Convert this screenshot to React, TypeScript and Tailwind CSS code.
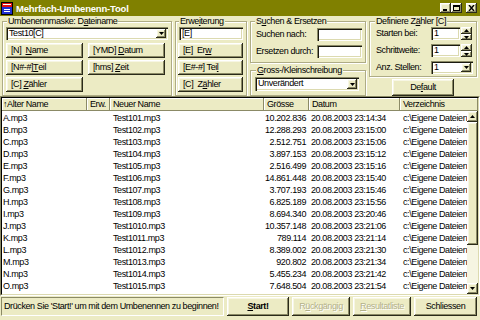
import React from "react";

const raised =
  "bg-[#ecebc4] shadow-[inset_-1px_-1px_0_#2a2a1a,inset_1px_1px_0_#ffffff,inset_-2px_-2px_0_#8b8a66,inset_2px_2px_0_#f7f6e4]";
const sunken =
  "bg-white shadow-[inset_1px_1px_0_#8b8a66,inset_2px_2px_0_#1a1a10,inset_-1px_-1px_0_#ffffff,inset_-2px_-2px_0_#dcdab0]";

function Btn({
  children,
  className = "",
}: {
  children: React.ReactNode;
  className?: string;
}) {
  return (
    <div className={`${raised} flex items-center pl-[5px] whitespace-nowrap ${className}`}>
      {children}
    </div>
  );
}

function CBtn({
  children,
  className = "",
}: {
  children: React.ReactNode;
  className?: string;
}) {
  return (
    <div className={`${raised} flex items-center justify-center whitespace-nowrap ${className}`}>
      {children}
    </div>
  );
}

function Group({
  title,
  className = "",
  legendClass = "",
  children,
}: {
  title: React.ReactNode;
  className?: string;
  legendClass?: string;
  children: React.ReactNode;
}) {
  return (
    <fieldset
      className={`border border-[#aeac85] shadow-[1px_1px_0_#ffffff,inset_1px_1px_0_#ffffff] ${className}`}
    >
      <legend className={`px-[1px] leading-[11px] bg-[#ecebc4] ${legendClass}`}>{title}</legend>
      {children}
    </fieldset>
  );
}

function Down() {
  return (
    <svg width="5" height="3" viewBox="0 0 5 3">
      <polygon points="0,0 5,0 2.5,3" fill="#000" />
    </svg>
  );
}
function Up() {
  return (
    <svg width="5" height="3" viewBox="0 0 5 3">
      <polygon points="0,3 5,3 2.5,0" fill="#000" />
    </svg>
  );
}

function Combo({ value, className = "" }: { value: string; className?: string }) {
  return (
    <div className={`${sunken} flex items-stretch p-[2px] ${className}`}>
      <div className="flex-1 pl-[1px] leading-[9px] whitespace-nowrap overflow-hidden">{value}</div>
      <div className={`${raised} w-[10px] flex items-center justify-center`}>
        <Down />
      </div>
    </div>
  );
}

function Input({ value, className = "" }: { value: string; className?: string }) {
  return (
    <div className={`${sunken} pl-[3px] leading-[13px] whitespace-nowrap ${className}`}>{value}</div>
  );
}

function Spinner() {
  return (
    <div className="flex flex-col w-[11px] h-[13px] ml-[1px]">
      <div className={`${raised} h-[7px] flex items-center justify-center`}>
        <Up />
      </div>
      <div className={`${raised} h-[6px] flex items-center justify-center`}>
        <Down />
      </div>
    </div>
  );
}

function TB({ kind }: { kind: "min" | "max" | "close" }) {
  return (
    <div className={`${raised} w-[11px] h-[10px] flex items-center justify-center`}>
      <svg width="7" height="6" viewBox="0 0 7 6">
        {kind === "min" && <rect x="1" y="4" width="4" height="2" fill="#000" />}
        {kind === "max" && (
          <>
            <rect x="0.5" y="0.5" width="6" height="5" fill="none" stroke="#000" />
            <rect x="0" y="0" width="7" height="2" fill="#000" />
          </>
        )}
        {kind === "close" && (
          <path d="M1 0 L6 6 M6 0 L1 6" stroke="#000" strokeWidth="1.4" />
        )}
      </svg>
    </div>
  );
}

const rows: [string, string, string, string][] = [
  ["A.mp3", "Test101.mp3", "10.202.836", "20.08.2003 23:14:34"],
  ["B.mp3", "Test102.mp3", "12.288.293", "20.08.2003 23:15:00"],
  ["C.mp3", "Test103.mp3", "2.512.751", "20.08.2003 23:15:06"],
  ["D.mp3", "Test104.mp3", "3.897.153", "20.08.2003 23:15:12"],
  ["E.mp3", "Test105.mp3", "2.516.499", "20.08.2003 23:15:16"],
  ["F.mp3", "Test106.mp3", "14.861.448", "20.08.2003 23:15:40"],
  ["G.mp3", "Test107.mp3", "3.707.193", "20.08.2003 23:15:46"],
  ["H.mp3", "Test108.mp3", "6.825.189", "20.08.2003 23:15:56"],
  ["I.mp3", "Test109.mp3", "8.694.340", "20.08.2003 23:20:46"],
  ["J.mp3", "Test1010.mp3", "10.357.148", "20.08.2003 23:21:06"],
  ["K.mp3", "Test1011.mp3", "789.114", "20.08.2003 23:21:14"],
  ["L.mp3", "Test1012.mp3", "8.389.002", "20.08.2003 23:21:30"],
  ["M.mp3", "Test1013.mp3", "920.802", "20.08.2003 23:21:34"],
  ["N.mp3", "Test1014.mp3", "5.455.234", "20.08.2003 23:21:42"],
  ["O.mp3", "Test1015.mp3", "7.648.504", "20.08.2003 23:21:54"],
];

const hdr =
  "bg-[#ecebc4] shadow-[inset_-1px_-1px_0_#8b8a66,inset_1px_1px_0_#ffffff] h-full flex items-center pl-[3px] whitespace-nowrap overflow-hidden";

export default function App() {
  return (
    <div className="w-[480px] h-[320px] overflow-hidden bg-[#ecebc4] text-black text-[9px] tracking-[-0.4px] leading-[11px] font-['Liberation_Sans',Arial,sans-serif] flex flex-col">
      {/* Title bar */}
      <div className="h-[16px] shrink-0 bg-[#808000] flex items-center pl-[1px] pr-[3px]">
        <svg width="12" height="13" viewBox="0 0 12 13">
          <rect x="0" y="0" width="12" height="13" fill="#000" />
          <rect x="1" y="1" width="10" height="11" fill="#2030d0" />
          <rect x="1" y="1" width="10" height="4" fill="#e01010" />
          <rect x="2" y="2" width="8" height="1" fill="#ffffff" />
          <rect x="3" y="7" width="6" height="1" fill="#ffffff" />
          <rect x="3" y="9" width="6" height="1" fill="#ffffff" />
        </svg>
        <span className="ml-[3px] text-white font-bold text-[9.5px] tracking-[-0.2px]">
          Mehrfach-Umbenenn-Tool
        </span>
        <div className="ml-auto flex items-center">
          <TB kind="min" />
          <TB kind="max" />
          <div className="w-[4px]" />
          <TB kind="close" />
        </div>
      </div>

      {/* Top panel */}
      <div className="h-[80px] shrink-0 flex pl-[2px] pr-[3px] gap-[3px]">
        <Group
          title={
            <>
              Umbenennmaske: D<u>a</u>teiname
            </>
          }
          className="w-[170px] h-[80px] pl-[3px] pr-[3px]"
          legendClass="ml-[1px]"
        >
          <Combo value="Test10[C]" className="h-[13px]" />
          <div className="mt-[3px] grid grid-cols-[77px_77px] gap-x-[5px] gap-y-[2px]">
            <Btn className="h-[15px]">
              [N]&nbsp;&nbsp;<u>N</u>ame
            </Btn>
            <Btn className="h-[15px]">
              [YMD]&nbsp;<u>D</u>atum
            </Btn>
            <Btn className="h-[15px]">
              [N#-#] <u>T</u>eil
            </Btn>
            <Btn className="h-[15px]">
              [hms]&nbsp;<u>Z</u>eit
            </Btn>
            <Btn className="h-[15px]">
              [C]&nbsp;<u>Z</u>ähler
            </Btn>
          </div>
        </Group>

        <Group
          title={
            <>
              Erwe<u>i</u>terung
            </>
          }
          className="w-[72px] h-[80px] pl-[2px] pr-[3px]"
          legendClass="ml-[1px]"
        >
          <Input value="[E]" className="h-[13px] ml-[1px]" />
          <div className="mt-[3px] flex flex-col gap-[2px]">
            <Btn className="h-[15px]">
              [E]&nbsp;&nbsp;Er<u>w</u>
            </Btn>
            <Btn className="h-[15px]">
              [E#-#] Tei<u>l</u>
            </Btn>
            <Btn className="h-[15px]">
              [C]&nbsp;&nbsp;Z<u>ä</u>hler
            </Btn>
          </div>
        </Group>

        <div className="w-[116px] flex flex-col">
          <Group
            title={
              <>
                S<u>u</u>chen &amp; Ersetzen
              </>
            }
            className="h-[47px] pl-[5px] pr-[3px] pt-[1px]"
            legendClass="-ml-[1px]"
          >
            <div className="flex items-center h-[13px]">
              <span className="flex-1 whitespace-nowrap">Suchen nach:</span>
              <Input value="" className="w-[45px] h-[13px]" />
            </div>
            <div className="flex items-center h-[13px] mt-[4px]">
              <span className="flex-1 whitespace-nowrap">Ersetzen durch:</span>
              <Input value="" className="w-[45px] h-[13px]" />
            </div>
          </Group>
          <Group
            title={
              <>
                <u>G</u>ross-/Kleinschreibung
              </>
            }
            className="mt-[2px] h-[31px] pl-[4px] pr-[6px]"
            legendClass="ml-[1px]"
          >
            <Combo value="Unverändert" className="mt-[1px] h-[14px]" />
          </Group>
        </div>

        <div className="flex-1 flex flex-col">
          <Group
            title={
              <>
                Definiere Z<u>ä</u>hler [C]
              </>
            }
            className="h-[61px] pl-[6px] pr-[3px]"
            legendClass="-ml-[1px]"
          >
            <div className="flex items-center h-[13px]">
              <span className="w-[55px] whitespace-nowrap">Starten bei:</span>
              <Input value="1" className="w-[29px] h-[13px]" />
              <Spinner />
            </div>
            <div className="flex items-center h-[13px] mt-[4px]">
              <span className="w-[55px] whitespace-nowrap">Schrittweite:</span>
              <Input value="1" className="w-[29px] h-[13px]" />
              <Spinner />
            </div>
            <div className="flex items-center h-[13px] mt-[4px]">
              <span className="w-[55px] whitespace-nowrap">Anz. Stellen:</span>
              <Combo value="1" className="w-[42px] h-[13px]" />
            </div>
          </Group>
          <CBtn className="mt-[2px] h-[17px] w-[62px] mx-auto">
            De<u>f</u>ault
          </CBtn>
        </div>
      </div>

      {/* List */}
      <div className="h-[200px] shrink-0 border border-t-[#8b8a66] border-l-[#8b8a66] border-r-white border-b-white">
        <div className="h-full border border-t-black border-l-black border-r-[#dcdab0] border-b-[#dcdab0] bg-white flex flex-col overflow-hidden">
          <div className="h-[13px] shrink-0 flex">
            <div className={`${hdr} w-[85px] !pl-[1px]`}>↑Alter Name</div>
            <div className={`${hdr} w-[23px]`}>Erw.</div>
            <div className={`${hdr} w-[154px]`}>Neuer Name</div>
            <div className={`${hdr} w-[45px]`}>Grösse</div>
            <div className={`${hdr} w-[91px]`}>Datum</div>
            <div className={`${hdr} flex-1`}>Verzeichnis</div>
          </div>
          <div className="flex-1 flex overflow-hidden">
            <div className="flex-1 overflow-hidden pt-[1px]">
              {rows.map((r) => (
                <div key={r[0]} className="h-[12px] flex leading-[12px] whitespace-nowrap">
                  <div className="w-[85px] pl-[1px]">{r[0]}</div>
                  <div className="w-[23px]" />
                  <div className="w-[154px] pl-[3px]">{r[1]}</div>
                  <div className="w-[45px] text-right pr-[3px]">{r[2]}</div>
                  <div className="w-[91px] pl-[2px]">{r[3]}</div>
                  <div className="flex-1 pl-[3px] overflow-hidden">c:\Eigene Dateien</div>
                </div>
              ))}
              <div className="h-[3px] overflow-hidden flex leading-[12px] whitespace-nowrap">
                <div className="w-[85px] pl-[1px]">P.mp3</div>
                <div className="w-[23px]" />
                <div className="w-[154px] pl-[3px]">Test1016.mp3</div>
                <div className="w-[45px] text-right pr-[3px]">3.723.831</div>
                <div className="w-[91px] pl-[2px]">20.08.2003 23:22:02</div>
                <div className="flex-1 pl-[3px] overflow-hidden">c:\Eigene Dateien</div>
              </div>
            </div>
            <div className="w-[11px] shrink-0 flex flex-col bg-[#f6f5e2]">
              <div className={`${raised} h-[11px] flex items-center justify-center`}>
                <Up />
              </div>
              <div className={`${raised} h-[123px]`} />
              <div className="flex-1" />
              <div className={`${raised} h-[11px] flex items-center justify-center`}>
                <Down />
              </div>
            </div>
          </div>
        </div>
      </div>

      {/* Status bar */}
      <div className="flex-1 flex items-start pt-[1px] pl-[1px] pr-[3px] gap-[3px]">
        <div className="w-[223px] h-[19px] border border-t-[#8b8a66] border-l-[#8b8a66] border-r-white border-b-white pl-[2px] leading-[17px] whitespace-nowrap">
          Drücken Sie 'Start!' um mit dem Umbenennen zu beginnen!
        </div>
        <CBtn className="w-[62px] h-[19px] font-bold shadow-[inset_-1px_-1px_0_#000,inset_1px_1px_0_#ffffff,inset_-2px_-2px_0_#8b8a66]">
          <u>S</u>tart!
        </CBtn>
        <CBtn className="w-[58px] h-[19px] text-[#b3b18a] [text-shadow:1px_1px_0_#ffffff]">
          R<u>ü</u>ckgängig
        </CBtn>
        <CBtn className="w-[58px] h-[19px] text-[#b3b18a] [text-shadow:1px_1px_0_#ffffff]">
          <u>R</u>esultatliste
        </CBtn>
        <CBtn className="flex-1 h-[19px]">Schliessen</CBtn>
      </div>
    </div>
  );
}
